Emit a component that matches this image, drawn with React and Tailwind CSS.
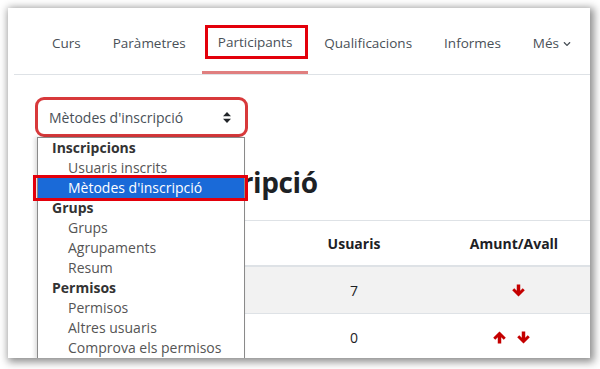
import React from "react";
import { FaChevronDown } from "react-icons/fa";

const font = { fontFamily: '"Open Sans", "Noto Sans", sans-serif' };

function NavItem({ children, active, boxed }) {
  return (
    <div
      className={
        "relative flex items-center px-4 pt-[5px] text-[13.5px] text-[#495057] " +
        (active ? "border-b-[3px] border-[#e07f7f]" : "")
      }
    >
      {children}
      {boxed && (
        <div className="absolute left-[3px] right-0 top-[17px] h-[34px] border-[3px] border-[#e3000b]" />
      )}
    </div>
  );
}

function SortIcon() {
  return (
    <svg width="8" height="11" viewBox="0 0 8 11" className="text-[#212529]">
      <path d="M4 0 L8 4.3 L0 4.3 Z" fill="currentColor" />
      <path d="M4 11 L8 6.7 L0 6.7 Z" fill="currentColor" />
    </svg>
  );
}

function Arrow({ up }) {
  return (
    <svg
      width="13"
      height="13"
      viewBox="0 0 12 12"
      className={"text-[#c40000] " + (up ? "rotate-180" : "")}
    >
      <path
        d="M4.4 0.5 H7.6 V6.2 L9.9 3.9 L11.8 5.8 L6 11.6 L0.2 5.8 L2.1 3.9 L4.4 6.2 Z"
        fill="currentColor"
      />
    </svg>
  );
}

function Group({ children }) {
  return (
    <div className="h-[20px] leading-[20px] pl-[14px] font-bold text-[#333]">{children}</div>
  );
}
function Opt({ children, selected }) {
  return (
    <div
      className={
        "h-[20px] leading-[20px] pl-[30px] " +
        (selected ? "bg-[#1a6ad8] text-white" : "text-[#555]")
      }
    >
      {children}
    </div>
  );
}

export default function App() {
  return (
    <div className="w-[600px] h-[369px] bg-white pt-[8px] pl-[8px]" style={font}>
      <div className="relative w-[582px] h-[350px] bg-white overflow-hidden shadow-[2px_2px_8px_2px_rgba(0,0,0,0.45)]">
        {/* nav */}
        <div className="ml-[6px] h-[67px] border-b border-[#dee2e6] flex pl-[22px]">
          <NavItem>Curs</NavItem>
          <NavItem>Paràmetres</NavItem>
          <NavItem active boxed>Participants</NavItem>
          <NavItem>Qualificacions</NavItem>
          <NavItem>Informes</NavItem>
          <NavItem>
            <span>Més</span>
            <FaChevronDown className="ml-[4px] w-[8px] h-[8px] text-[#495057]" />
          </NavItem>
        </div>

        {/* select */}
        <div className="ml-[27px] mt-[22px] w-[213px] h-[40px] rounded-[9px] border-[3px] border-[#d8393b] flex items-center justify-between pl-[11px] pr-[14px] text-[14px] text-[#495057]">
          <span>Mètodes d'inscripció</span>
          <SortIcon />
        </div>

        {/* heading */}
        <h2 className="ml-[30px] mt-[28px] text-[28px] leading-[34px] font-bold tracking-[-0.4px] text-[#1d2125]">
          Mètodes d'inscripció
        </h2>

        {/* table */}
        <div className="ml-[29px] mt-[21px] w-[577px] text-[14px] text-[#1d2125]">
          <div className="grid grid-cols-[257px_120px_200px] h-[47px] border-t border-[#dee2e6] border-b-2 border-b-[#dee2e6] items-center font-bold">
            <div></div>
            <div className="text-center">Usuaris</div>
            <div className="text-center">Amunt/Avall</div>
          </div>
          <div className="grid grid-cols-[257px_120px_200px] h-[47px] border-b border-[#dee2e6] bg-[#f2f2f2] items-center">
            <div></div>
            <div className="text-center">7</div>
            <div className="flex justify-center pl-[8px]">
              <Arrow />
            </div>
          </div>
          <div className="grid grid-cols-[257px_120px_200px] h-[46px] items-center">
            <div></div>
            <div className="text-center">0</div>
            <div className="flex justify-center gap-[11px] pr-[6px]">
              <Arrow up />
              <Arrow />
            </div>
          </div>
        </div>

        {/* dropdown list overlay */}
        <div className="absolute left-[29px] top-[129px] w-[208px] h-[222px] bg-white border border-[#8a8a8a] text-[14px] shadow-[-2px_0_4px_rgba(0,0,0,0.15)]">
          <Group>Inscripcions</Group>
          <Opt>Usuaris inscrits</Opt>
          <Opt selected>Mètodes d'inscripció</Opt>
          <Group>Grups</Group>
          <Opt>Grups</Opt>
          <Opt>Agrupaments</Opt>
          <Opt>Resum</Opt>
          <Group>Permisos</Group>
          <Opt>Permisos</Opt>
          <Opt>Altres usuaris</Opt>
          <Opt>Comprova els permisos</Opt>
          <div className="absolute left-[-5px] top-[37px] w-[215px] h-[26px] border-[3px] border-[#e3000b]" />
        </div>
      </div>
    </div>
  );
}
